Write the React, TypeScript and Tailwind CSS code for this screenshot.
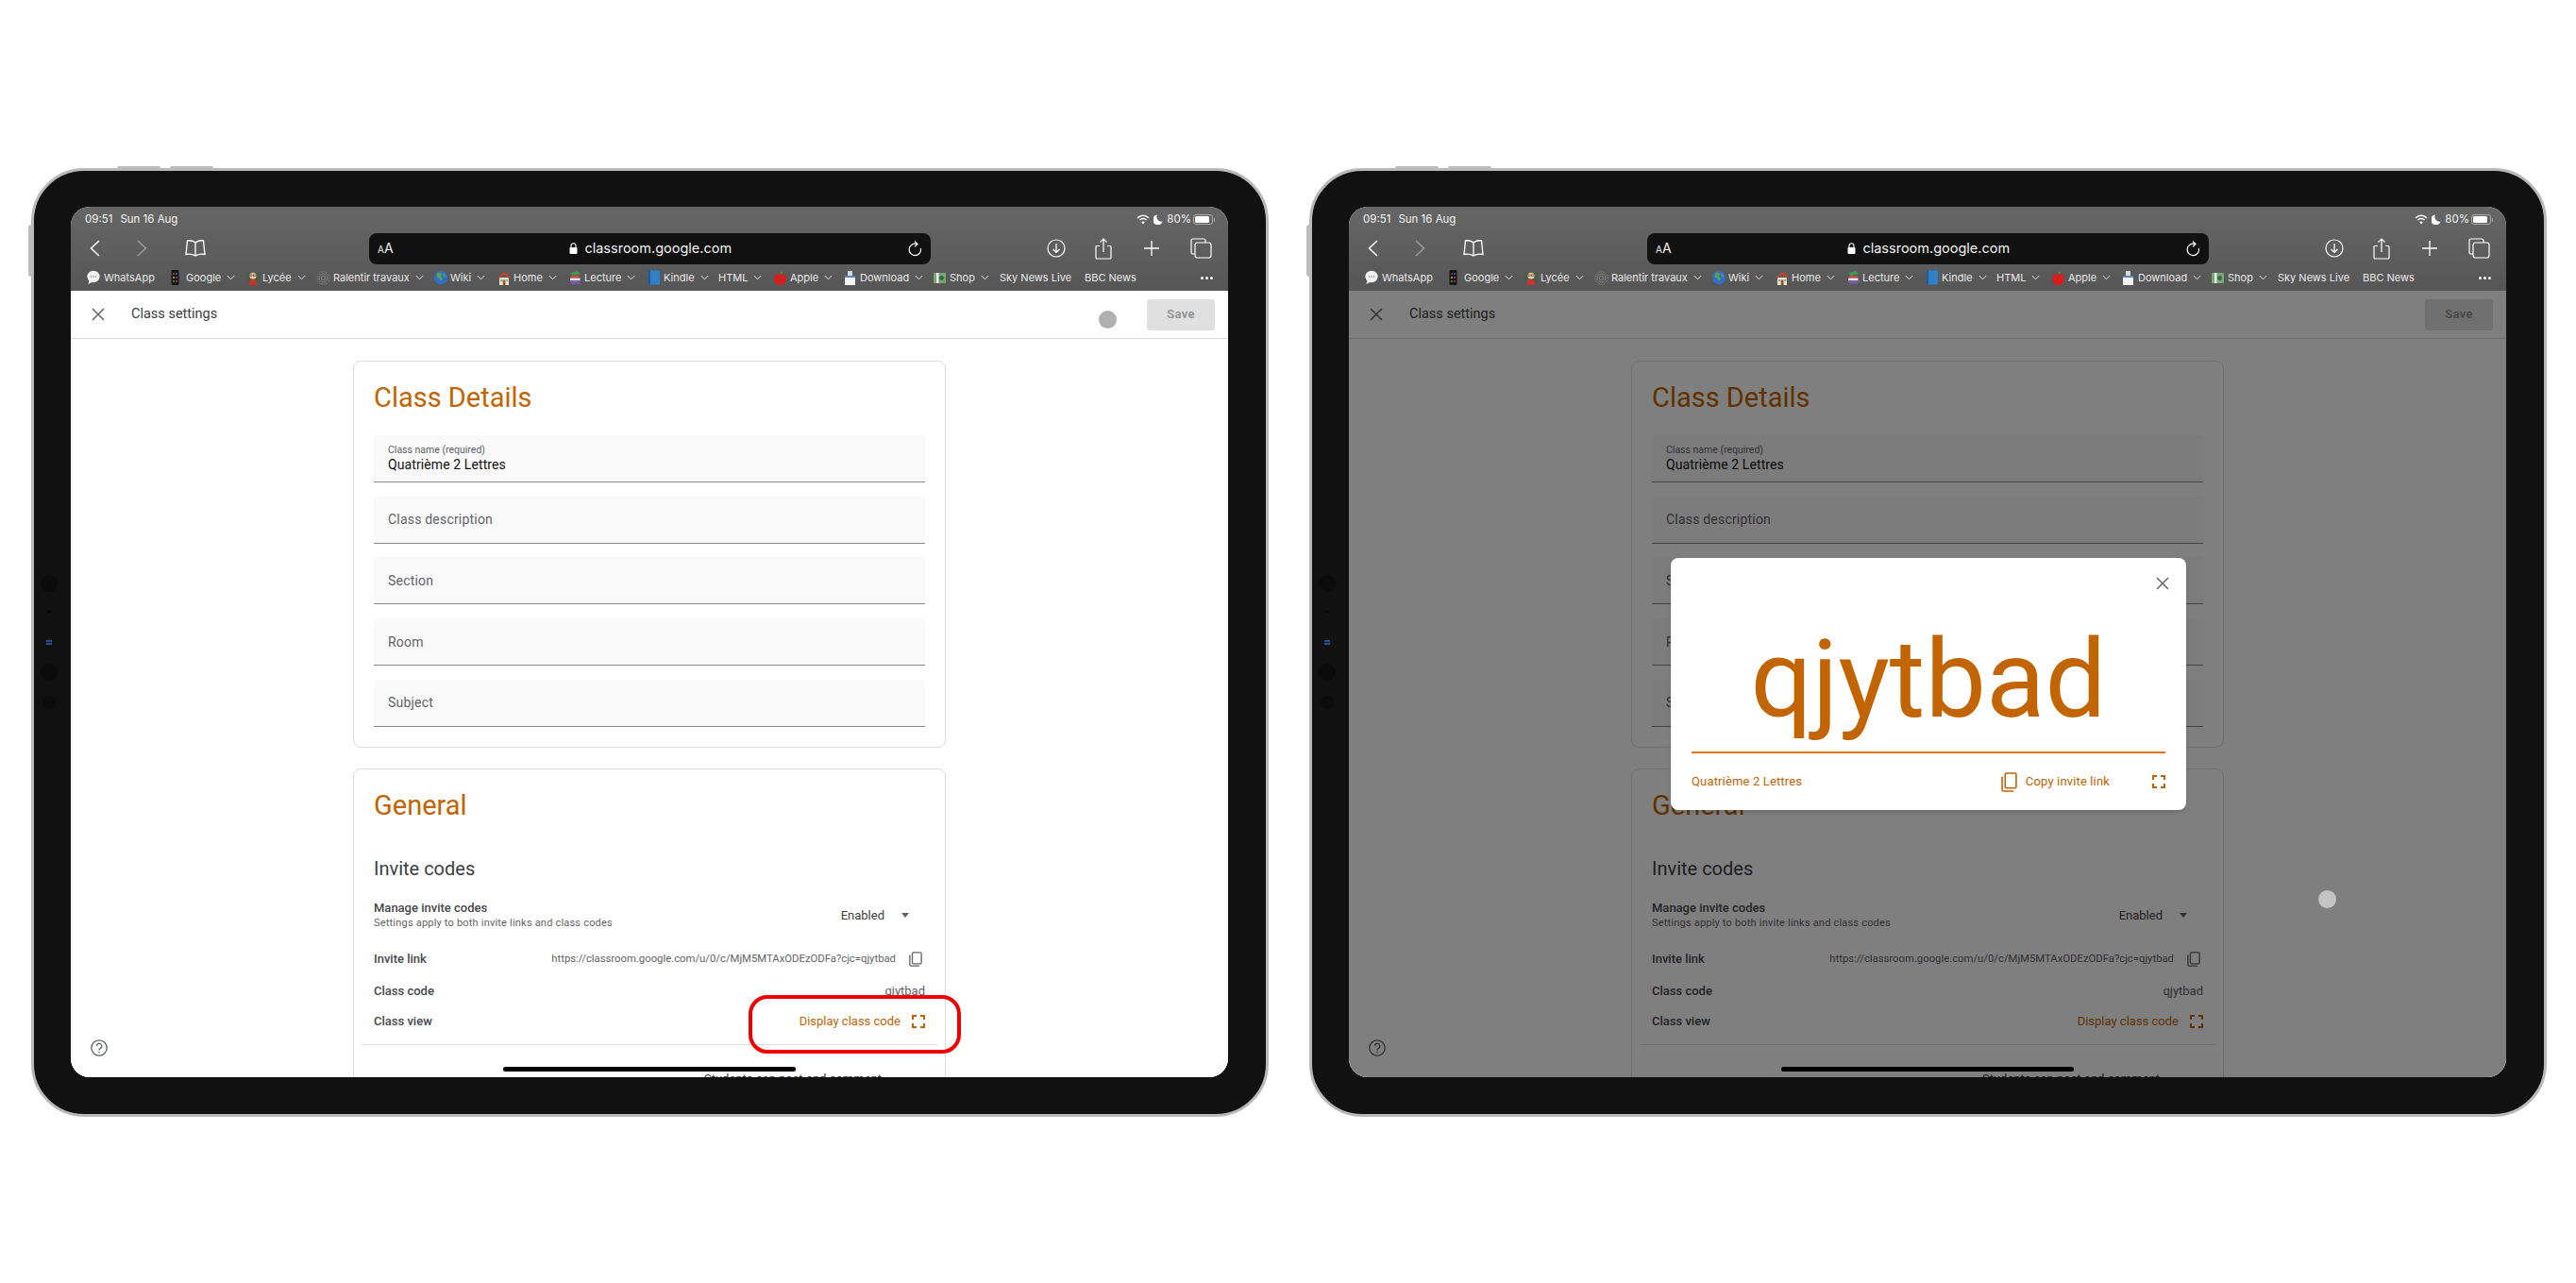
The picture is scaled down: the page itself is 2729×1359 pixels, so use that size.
import React from "react";

const ORANGE = "#c26401";

function Chev() {
  return (
    <svg width="9" height="6" viewBox="0 0 9 6" className="shrink-0 ml-[6px]" fill="none" stroke="#e4e4e4" strokeWidth="1">
      <path d="M0.8 1 L4.5 4.8 L8.2 1" />
    </svg>
  );
}

const Emoji: Record<string, React.ReactNode> = {
  whatsapp: (
    <svg width="14" height="16" viewBox="0 0 14 16">
      <ellipse cx="7" cy="7" rx="6.6" ry="6.2" fill="#f2f2f2" />
      <path d="M2.5 11 L1.5 15 L6 12.5 Z" fill="#f2f2f2" />
      <circle cx="4.6" cy="7" r=".7" fill="#777" />
      <circle cx="7" cy="7" r=".7" fill="#777" />
      <circle cx="9.4" cy="7" r=".7" fill="#777" />
    </svg>
  ),
  google: (
    <svg width="9" height="16" viewBox="0 0 9 16">
      <rect x="0.5" y="0" width="8" height="16" rx="1.4" fill="#141414" />
      <circle cx="3" cy="4" r=".9" fill="#d94a3a" />
      <circle cx="6" cy="4" r=".9" fill="#3f7fd9" />
      <circle cx="3" cy="8" r=".9" fill="#e8c23a" />
      <circle cx="6" cy="8" r=".9" fill="#c04ab0" />
      <circle cx="3" cy="12" r=".9" fill="#3fae5a" />
      <circle cx="6" cy="12" r=".9" fill="#d94a3a" />
    </svg>
  ),
  lycee: (
    <svg width="14" height="16" viewBox="0 0 14 16">
      <rect x="0" y="2" width="14" height="11" fill="#4d5c48" />
      <circle cx="7" cy="6" r="3.6" fill="#eec9a5" />
      <path d="M3 5 Q7 0 11 5 L10 3.6 Q7 2.6 4 3.6 Z" fill="#3a2a20" />
      <rect x="4" y="5" width="2.4" height="1.3" fill="none" stroke="#333" strokeWidth=".5" />
      <rect x="7.6" y="5" width="2.4" height="1.3" fill="none" stroke="#333" strokeWidth=".5" />
      <path d="M3 16 L3 11 Q7 9 11 11 L11 16 Z" fill="#c8332e" />
    </svg>
  ),
  ralentir: (
    <svg width="15" height="15" viewBox="0 0 15 15" fill="none" stroke="#8a8a8a" strokeWidth=".8">
      <circle cx="7.5" cy="7.5" r="6.6" strokeDasharray="1.4 .8" />
      <circle cx="7.5" cy="7.5" r="4.4" />
      <circle cx="7.5" cy="7.5" r="2.2" />
    </svg>
  ),
  wiki: (
    <svg width="14" height="14" viewBox="0 0 14 14">
      <circle cx="7" cy="7" r="7" fill="#2f6fd0" />
      <path d="M3 2 Q6 1 8 3 L7 6 L9 8 L7 11 L5 8 L2.5 6 Z" fill="#5aa04a" />
      <path d="M9.5 2 L12.5 5 L11 6.5 L9.5 5 Z" fill="#5aa04a" />
    </svg>
  ),
  home: (
    <svg width="14" height="15" viewBox="0 0 14 15">
      <rect x="9.6" y="1" width="2" height="4" fill="#a8452c" />
      <rect x="2" y="7" width="10" height="8" fill="#efe2c4" />
      <path d="M0 8 L7 1 L14 8 L12.5 8.6 L7 3.5 L1.5 8.6 Z" fill="#c8452e" />
      <rect x="5.7" y="9.5" width="2.8" height="5.5" fill="#8a5a30" />
      <rect x="3" y="9" width="2" height="2" fill="#6ca6d8" />
      <rect x="9.3" y="9" width="2" height="2" fill="#6ca6d8" />
    </svg>
  ),
  lecture: (
    <svg width="13" height="14" viewBox="0 0 13 14">
      <path d="M1 2 L9 0 L12 3 L4 5 Z" fill="#3f9a4e" />
      <rect x="2" y="5" width="9" height="2.6" fill="#c9473c" />
      <rect x="1" y="7.6" width="10.5" height="2.6" fill="#e5e5e5" />
      <rect x="1.5" y="10.6" width="10" height="3" fill="#7a5ab0" />
    </svg>
  ),
  kindle: (
    <svg width="12" height="16" viewBox="0 0 12 16">
      <rect x="0" y="0.5" width="12" height="15" rx=".8" fill="#2f7fc9" />
      <rect x="0" y="0.5" width="2" height="15" fill="#1c5c98" />
    </svg>
  ),
  apple: (
    <svg width="13" height="15" viewBox="0 0 13 15">
      <path d="M6.5 4 C3 2 0 4 0 8 C0 12 3 15 4.5 15 C5.5 15 6 14.5 6.5 14.5 C7 14.5 7.5 15 8.5 15 C10 15 13 12 13 8 C13 4 10 2 6.5 4 Z" fill="#d3201f" />
      <path d="M6.5 4 L7 1.5 L9 0 L9 2 Z" fill="#4e9a3a" />
    </svg>
  ),
  download: (
    <svg width="11" height="15" viewBox="0 0 11 15">
      <rect x="3" y="0" width="5" height="5" fill="#d8d8d8" />
      <rect x="0" y="5" width="11" height="2" fill="#5b86c4" />
      <rect x="0" y="7" width="11" height="8" fill="#f2f2f2" />
    </svg>
  ),
  shop: (
    <svg width="13" height="11" viewBox="0 0 13 11">
      <rect x="0" y="0" width="13" height="11" fill="#7aa37a" />
      <rect x="3" y="0" width="2.4" height="11" fill="#e8efe6" />
      <circle cx="8.5" cy="5.5" r="2.4" fill="#2f6b3f" />
    </svg>
  ),
};

type BM = { n: string; i?: string; c?: boolean; w: string; g?: string };
const bookmarks: BM[] = [
  { n: "WhatsApp", i: "whatsapp", w: "w-[89px]", g: "mr-[4px]" },
  { n: "Google", i: "google", c: true, w: "w-[80px]", g: "mr-[7px]" },
  { n: "Lycée", i: "lycee", c: true, w: "w-[74px]", g: "mr-[3px]" },
  { n: "Ralentir travaux", i: "ralentir", c: true, w: "w-[125px]", g: "mr-[3px]" },
  { n: "Wiki", i: "wiki", c: true, w: "w-[67px]", g: "mr-[3px]" },
  { n: "Home", i: "home", c: true, w: "w-[76px]", g: "mr-[3px]" },
  { n: "Lecture", i: "lecture", c: true, w: "w-[84px]", g: "mr-[3px]" },
  { n: "Kindle", i: "kindle", c: true, w: "w-[74px]", g: "mr-[4px]" },
  { n: "HTML", c: true, w: "w-[59px]" },
  { n: "Apple", i: "apple", c: true, w: "w-[75px]", g: "mr-[4px]" },
  { n: "Download", i: "download", c: true, w: "w-[94px]", g: "mr-[5px]" },
  { n: "Shop", i: "shop", c: true, w: "w-[70px]", g: "mr-[4px]" },
  { n: "Sky News Live", w: "w-[90px]" },
  { n: "BBC News", w: "w-[70px]" },
];

function BrowserChrome() {
  return (
    <div className="h-[89px] shrink-0 bg-gradient-to-b from-[#666666] to-[#565656] flex flex-col text-white [font-family:Inter,sans-serif]">
      <div className="h-[26px] flex items-center justify-between pl-[15px] pr-[14px] pt-[1px] text-[11.5px] leading-none">
        <div className="flex gap-[8px] text-[#f4f4f4]">
          <span>09:51</span>
          <span>Sun 16 Aug</span>
        </div>
        <div className="flex items-center text-[#f4f4f4]">
          <svg width="14" height="11" viewBox="0 0 14 11" fill="none" stroke="#fff" strokeWidth="1.5">
            <path d="M1 3.8 Q7 -1.2 13 3.8" />
            <path d="M3.4 6 Q7 3 10.6 6" />
            <path d="M7 10.6 L5.2 8.2 Q7 7 8.8 8.2 Z" fill="#fff" stroke="none" />
          </svg>
          <svg width="10" height="11" viewBox="0 0 10 11" className="ml-[4px]">
            <path d="M4 0.4 A5.4 5.4 0 1 0 9.7 7.6 A5 5 0 0 1 4 0.4 Z" fill="#fff" />
          </svg>
          <span className="ml-[4px]">80%</span>
          <span className="ml-[2px] w-[21px] h-[11px] rounded-[3px] border border-[#aaa] p-[1px] flex">
            <span className="w-[15px] h-full rounded-[1.5px] bg-white block" />
          </span>
          <span className="ml-[1px] w-[1px] h-[4px] bg-[#aaa] block" />
        </div>
      </div>
      <div className="h-[35px] flex items-center pt-[1px]">
        <svg width="11" height="18" viewBox="0 0 11 18" fill="none" stroke="#fff" strokeWidth="1.5" className="ml-[20px]">
          <path d="M10 1 L1.5 9 L10 17" />
        </svg>
        <svg width="11" height="18" viewBox="0 0 11 18" fill="none" stroke="#9a9a9a" strokeWidth="1.5" className="ml-[39px]">
          <path d="M1 1 L9.5 9 L1 17" />
        </svg>
        <svg width="22" height="18" viewBox="0 0 22 18" fill="none" stroke="#fff" strokeWidth="1.3" className="ml-[40px]">
          <path d="M11 3 Q7 0 2.5 1 L1 15.5 Q7 14.5 11 17 Q15 14.5 21 15.5 L19.5 1 Q15 0 11 3 Z M11 3 L11 17" />
        </svg>
        <div className="ml-[173px] w-[595px] h-[33px] rounded-[8px] bg-[#111111] flex items-center justify-between px-[9px] shrink-0">
          <span className="flex items-baseline text-[#f0f0f0] leading-none">
            <span className="text-[10px]">A</span>
            <span className="text-[14px]">A</span>
          </span>
          <span className="flex items-center gap-[7px] text-[14.5px] text-[#f2f2f2] leading-none">
            <svg width="9" height="12" viewBox="0 0 9 12">
              <path d="M2 5 V3.2 A2.5 2.5 0 0 1 7 3.2 V5" fill="none" stroke="#fff" strokeWidth="1.1" />
              <rect x="0.5" y="5" width="8" height="7" rx="1" fill="#fff" />
            </svg>
            classroom.google.com
          </span>
          <svg width="15" height="17" viewBox="0 0 15 17" fill="none" stroke="#fff" strokeWidth="1.2">
            <path d="M9 3.4 A6.2 6.2 0 1 0 13.4 8" />
            <path d="M7 0.8 L10 3.4 L7 6.2" />
          </svg>
        </div>
        <svg width="20" height="20" viewBox="0 0 20 20" fill="none" stroke="#fff" strokeWidth="1.2" className="ml-[123px]">
          <circle cx="10" cy="10" r="9" />
          <path d="M10 5 V14.5 M6.6 11 L10 14.5 L13.4 11" />
        </svg>
        <svg width="18" height="23" viewBox="0 0 18 23" fill="none" stroke="#fff" strokeWidth="1.2" className="ml-[31px]">
          <path d="M5 8.5 H2 Q1 8.5 1 9.5 V21 Q1 22 2 22 H16 Q17 22 17 21 V9.5 Q17 8.5 16 8.5 H13" />
          <path d="M9 15 V1 M5.5 4.5 L9 1 L12.5 4.5" />
        </svg>
        <svg width="18" height="18" viewBox="0 0 18 18" fill="none" stroke="#fff" strokeWidth="1.3" className="ml-[33px]">
          <path d="M9 1 V17 M1 9 H17" />
        </svg>
        <svg width="23" height="22" viewBox="0 0 23 22" fill="none" stroke="#fff" strokeWidth="1.2" className="ml-[32px]">
          <path d="M5 17 H3 Q1 17 1 15 V3 Q1 1 3 1 H14 Q16 1 16 3 V5" />
          <rect x="5" y="5" width="17" height="16" rx="2.5" />
        </svg>
      </div>
      <div className="flex-1 flex items-center pl-[17px] text-[11px] leading-none text-[#e8e8e8]">
        {bookmarks.map((b) => (
          <div key={b.n} className={`${b.w} shrink-0 flex items-center whitespace-nowrap`}>
            {b.i && <span className={`${b.g} flex items-center shrink-0`}>{Emoji[b.i]}</span>}
            <span>{b.n}</span>
            {b.c && <Chev />}
          </div>
        ))}
        <div className="ml-[53px] flex gap-[2px]">
          <span className="w-[3px] h-[3px] rounded-full bg-white block" />
          <span className="w-[3px] h-[3px] rounded-full bg-white block" />
          <span className="w-[3px] h-[3px] rounded-full bg-white block" />
        </div>
      </div>
    </div>
  );
}

function XIcon({ s = 14 }: { s?: number }) {
  return (
    <svg width={s} height={s} viewBox="0 0 14 14" fill="none" stroke="#5f6368" strokeWidth="1.5">
      <path d="M1 1 L13 13 M13 1 L1 13" />
    </svg>
  );
}

function CopyIcon({ color, w, h }: { color: string; w: number; h: number }) {
  return (
    <svg width={w} height={h} viewBox="0 0 16 20" fill="none" stroke={color} strokeWidth="1.5" preserveAspectRatio="none">
      <rect x="4" y="1" width="11" height="15" rx="1.2" />
      <path d="M1 4.5 V17.5 Q1 19 2.5 19 H12.5" />
    </svg>
  );
}

function FullIcon() {
  return (
    <svg width="14" height="14" viewBox="0 0 14 14" fill="none" stroke={ORANGE} strokeWidth="2">
      <path d="M1 5 V1 H5 M9 1 H13 V5 M13 9 V13 H9 M5 13 H1 V9" />
    </svg>
  );
}

function Field({ label, value }: { label: string; value?: string }) {
  return (
    <div className="h-[50px] bg-[#f9f9f9] rounded-t-[4px] border-b border-[#85888d] px-[15px] flex flex-col justify-center">
      {value ? (
        <>
          <span className="text-[10.5px] leading-[13px] text-[#5f6368]">{label}</span>
          <span className="text-[14px] leading-[18px] text-[#111111] tracking-[0.1px]">{value}</span>
        </>
      ) : (
        <span className="text-[14px] leading-[18px] text-[#5f6368] tracking-[0.2px]">{label}</span>
      )}
    </div>
  );
}

function PageContent() {
  return (
    <div className="flex-1 min-h-0 overflow-hidden bg-white flex flex-col [font-family:Roboto,sans-serif]">
      <div className="h-[51px] shrink-0 border-b border-[#dadce0] flex items-center pl-[22px] pr-[14px]">
        <XIcon />
        <span className="ml-[28px] text-[14.5px] text-[#3c4043]">Class settings</span>
        <div className="ml-auto w-[72px] h-[33px] rounded-[3px] bg-[#e0e0e0] flex items-center justify-center text-[13px] font-medium text-[#8c8c8c] tracking-[0.3px]">
          Save
        </div>
      </div>
      <div className="flex-1 min-h-0 flex flex-col items-center pt-[23px] gap-[22px]">
        <div className="w-[628px] h-[410px] shrink-0 rounded-[8px] border border-[#dadce0] px-[21px]">
          <div className="h-[78px] pb-[2px] flex items-center text-[29px] leading-none text-[#c26401]">Class Details</div>
          <div className="flex flex-col gap-[14.7px]">
            <Field label="Class name (required)" value="Quatrième 2 Lettres" />
            <Field label="Class description" />
            <Field label="Section" />
            <Field label="Room" />
            <Field label="Subject" />
          </div>
        </div>
        <div className="w-[628px] h-[420px] shrink-0 rounded-[8px] border border-[#dadce0] px-[21px]">
          <div className="h-[76px] flex items-center text-[29px] leading-none text-[#c26401]">General</div>
          <div className="h-[58px] flex items-center text-[20px] leading-none text-[#3c4043]">Invite codes</div>
          <div className="h-[41px] flex items-center justify-between">
            <div className="flex flex-col">
              <span className="text-[13px] leading-[16px] font-medium text-[#45484c]">Manage invite codes</span>
              <span className="text-[11px] leading-[16px] text-[#5f6368] tracking-[0.2px]">
                Settings apply to both invite links and class codes
              </span>
            </div>
            <div className="flex items-center pr-[17px] text-[13px] text-[#3c4043]">
              <span>Enabled</span>
              <svg width="8" height="5" viewBox="0 0 8 5" className="ml-[18px]">
                <path d="M0 0 H8 L4 5 Z" fill="#5f6368" />
              </svg>
            </div>
          </div>
          <div className="h-[52px] flex items-center justify-between">
            <span className="text-[13px] font-medium text-[#45484c]">Invite link</span>
            <div className="flex items-center text-[11.3px] text-[#5f6368]">
              <span>https://classroom.google.com/u/0/c/MjM5MTAxODEzODFa?cjc=qjytbad</span>
              <span className="ml-[14px] mr-[3px] flex">
                <CopyIcon color="#5f6368" w={14} h={16} />
              </span>
            </div>
          </div>
          <div className="h-[16px] flex items-center justify-between">
            <span className="text-[13px] font-medium text-[#45484c]">Class code</span>
            <span className="text-[13px] text-[#5f6368]">qjytbad</span>
          </div>
          <div className="h-[48px] flex items-center justify-between">
            <span className="text-[13px] font-medium text-[#45484c]">Class view</span>
            <div className="flex items-center gap-[12px] text-[13px] text-[#c26401]">
              <span>Display class code</span>
              <FullIcon />
            </div>
          </div>
          <div className="h-[1px] bg-[#dadce0] -mx-[13px]" />
          <div className="mt-[28px] flex justify-between text-[13px] leading-[16px] text-[#3c4043]">
            <span className="mt-[6px] font-medium">Stream</span>
            <span className="pr-[46px]">Students can post and comment</span>
          </div>
        </div>
      </div>
    </div>
  );
}

function Ipad({ dimmed }: { dimmed?: boolean }) {
  return (
    <div className="relative w-[1311px] h-[1005px] shrink-0 rounded-[56px] bg-[#111111] border-[3px] border-[#b9b9b9] pl-[39px] pr-[40px] pt-[38px] pb-[39px]">
      {/* hardware buttons */}
      <span className="absolute -top-[5px] left-[88px] w-[46px] h-[2px] bg-[#bdbdbd] rounded-t-sm" />
      <span className="absolute -top-[5px] left-[144px] w-[46px] h-[2px] bg-[#bdbdbd] rounded-t-sm" />
      <span className="absolute -left-[6px] top-[57px] w-[3px] h-[55px] bg-[#bdbdbd] rounded-l-sm" />
      {/* side camera */}
      <span className="absolute left-[7px] top-[428px] w-[18px] h-[18px] rounded-full bg-[#0b0b0b]" />
      <span className="absolute left-[15px] top-[466px] w-[2px] h-[2px] rounded-full bg-[#000]" />
      <span className="absolute left-[12px] top-[495px] w-[8px] h-[8px] rounded-full bg-[#1a1a1a] flex flex-col justify-center gap-[1px] px-[1px]">
        <span className="block h-[2px] bg-[#1f4f96]" />
        <span className="block h-[2px] bg-[#1f4f96]" />
      </span>
      <span className="absolute left-[7px] top-[522px] w-[18px] h-[18px] rounded-full bg-[#0b0b0b]" />
      <span className="absolute left-[9px] top-[556px] w-[14px] h-[14px] rounded-full bg-[#0b0b0b]" />

      <div className="relative w-full h-full rounded-[20px] overflow-hidden flex flex-col bg-white">
        <BrowserChrome />
        <PageContent />

        {/* help icon */}
        <svg width="18" height="18" viewBox="0 0 18 18" fill="none" stroke="#5f6368" strokeWidth="1.3" className="absolute left-[21px] top-[882px]">
          <circle cx="9" cy="9" r="8.2" />
          <path d="M6.4 7 A2.7 2.7 0 1 1 10.4 9.4 Q9 10.1 9 11.4" />
          <circle cx="9" cy="13.6" r=".8" fill="#5f6368" stroke="none" />
        </svg>

        {!dimmed && (
          <>
            <span className="absolute left-[1089px] top-[110px] w-[19px] h-[19px] rounded-full bg-[#b0b0b0]" />
            <div className="absolute left-[718px] top-[835px] w-[225px] h-[62px] rounded-[20px] border-[4px] border-[#f00000]" />
          </>
        )}

        {dimmed && (
          <>
            <div className="absolute left-0 right-0 top-[89px] bottom-0 bg-black/50" />
            <span className="absolute left-[1027px] top-[724px] w-[19px] h-[19px] rounded-full bg-[#c4c4c4]" />
            <div className="absolute left-[341px] top-[372px] w-[546px] h-[267px] rounded-[8px] bg-white shadow-md flex flex-col px-[22px] [font-family:Roboto,sans-serif]">
              <div className="h-[53px] flex items-center justify-end">
                <span className="mr-[-4px] flex">
                  <XIcon />
                </span>
              </div>
              <div className="h-[154px] pb-[2px] flex items-center justify-center border-b-2 border-[#e37400] text-[115px] leading-none text-[#c26401]">
                qjytbad
              </div>
              <div className="flex-1 flex items-center text-[13px] text-[#c26401] tracking-[0.15px]">
                <span>Quatrième 2 Lettres</span>
                <span className="ml-auto flex">
                  <CopyIcon color={ORANGE} w={17} h={21} />
                </span>
                <span className="ml-[9px]">Copy invite link</span>
                <span className="ml-[45px] flex">
                  <FullIcon />
                </span>
              </div>
            </div>
          </>
        )}

        {/* home indicator */}
        <span className="absolute left-[458px] top-[911px] w-[310px] h-[5px] rounded-full bg-black" />
      </div>
    </div>
  );
}

export default function App() {
  return (
    <div className="w-[2729px] h-[1359px] overflow-hidden bg-white flex items-start gap-[43px] pl-[33px] pt-[178px]">
      <Ipad />
      <Ipad dimmed />
    </div>
  );
}
